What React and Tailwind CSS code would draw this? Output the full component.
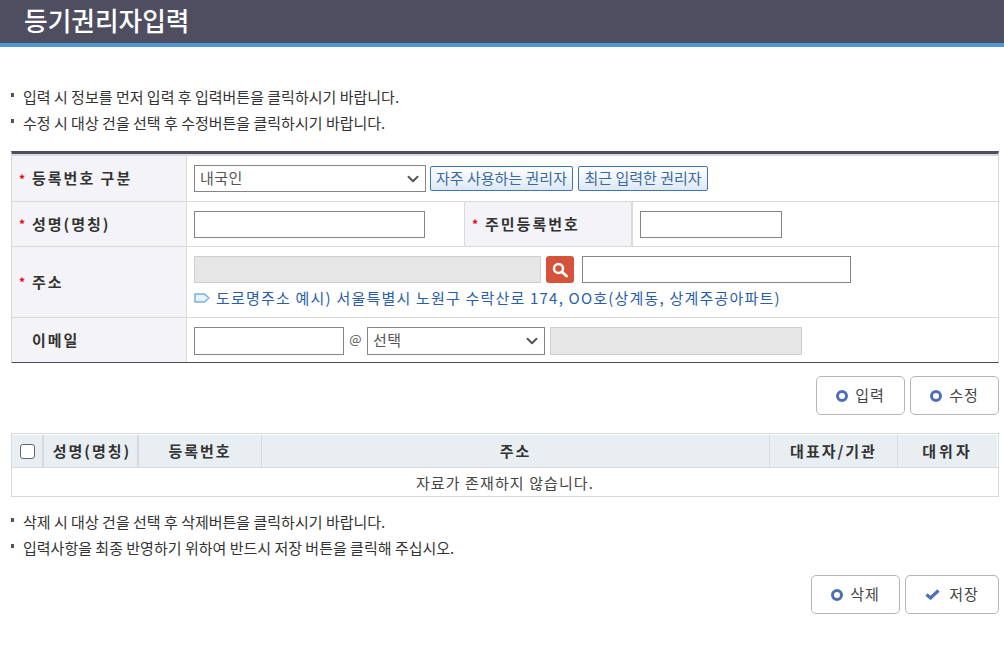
import React from "react";
import { ChevronDown } from "lucide-react";

const font = { fontFamily: '"Noto Sans CJK KR", "Liberation Sans", sans-serif' };

function Note({ children }) {
  return (
    <div className="flex items-center h-[26px] text-[15px] text-[#333]">
      <span className="w-[3px] h-[4px] bg-[#555] ml-[11px] mr-[9px] mb-[4px]" />
      <span>{children}</span>
    </div>
  );
}

function Label({ children, star, className = "" }) {
  return (
    <div className={`flex items-center bg-[#f4f4f8] font-bold text-[15px] text-[#333] tracking-[2px] ${className}`}>
      <span className="w-[13px] ml-[7px] mr-0 text-[#e8001c] text-[12px] font-bold">{star ? "*" : ""}</span>
      <span>{children}</span>
    </div>
  );
}

function Input({ className = "", disabled }) {
  return (
    <div className={`h-[27px] border ${disabled ? "border-[#cfcfcf] bg-[#e6e6e6]" : "border-[#858585] bg-white"} ${className}`} />
  );
}

function Select({ value, className = "" }) {
  return (
    <div className={`h-[27px] border border-[#858585] bg-white flex items-center justify-between pl-[5px] pr-[3px] text-[15px] text-[#555] tracking-[0.5px] ${className}`}>
      <span>{value}</span>
      <ChevronDown size={18} strokeWidth={2.6} className="text-[#555]" />
    </div>
  );
}

function LinkBtn({ children, className = "" }) {
  return (
    <div className={`h-[25px] rounded-[2px] border border-[#3f74b8] bg-gradient-to-b from-white to-[#dce8f5] flex items-center justify-center text-[15px] text-[#3d6a9e] ${className}`}>
      {children}
    </div>
  );
}

function Dot() {
  return <span className="w-[12px] h-[12px] rounded-full border-[3px] border-[#4f6fb0] bg-white" />;
}

function Check() {
  return (
    <svg width="15" height="11" viewBox="0 0 15 11" aria-hidden="true">
      <path d="M1.5 5.5 L5.5 9 L13.5 1.5" fill="none" stroke="#4f6fb0" strokeWidth="3.2" />
    </svg>
  );
}

function ActionBtn({ icon, children, className = "", gap = "gap-[7px]" }) {
  return (
    <div className={`h-[39px] w-[89px] rounded-[5px] border border-[#b5b5b5] bg-white flex items-center justify-center ${gap} text-[15px] text-[#444] tracking-[1px] ${className}`}>
      {icon}
      <span>{children}</span>
    </div>
  );
}

function Head({ children, className = "" }) {
  return (
    <div className={`flex items-center justify-center bg-[#e9eef3] border-r border-[#d6d9dd] font-bold text-[15px] text-[#333] tracking-[2px] ${className}`}>
      {children}
    </div>
  );
}

export default function App() {
  return (
    <div style={font} className="w-[1004px] h-[667px] bg-white overflow-hidden">
      <header className="h-[47px] bg-[#4f4e60] border-b-[4px] border-[#4f97d3] flex items-center pl-[24px]">
        <h1 className="text-[25.7px] font-medium text-white leading-none mb-[3px]">등기권리자입력</h1>
      </header>

      <div className="pt-[37px]">
        <Note>입력 시 정보를 먼저 입력 후 입력버튼을 클릭하시기 바랍니다.</Note>
        <Note>수정 시 대상 건을 선택 후 수정버튼을 클릭하시기 바랍니다.</Note>
      </div>

      <section className="ml-[11px] mt-[15px] w-[988px] border-t-[3px] border-t-[#4f4e60] border-b border-b-[#4f4e60] border-x border-x-[#d9d9d9]">
        <div className="flex h-[48px] border-t-[2px] border-t-[#d9d9d9] border-b border-b-[#d9d9d9]">
          <Label star className="w-[175px] border-r border-r-[#d9d9d9]">등록번호 구분</Label>
          <div className="flex-1 flex items-center pl-[7px]">
            <Select value="내국인" className="w-[232px]" />
            <LinkBtn className="w-[143px] ml-[4px]">자주 사용하는 권리자</LinkBtn>
            <LinkBtn className="w-[130px] ml-[5px]">최근 입력한 권리자</LinkBtn>
          </div>
        </div>
        <div className="flex h-[45px] border-b border-b-[#d9d9d9]">
          <Label star className="w-[175px] border-r border-r-[#d9d9d9]">성명(명칭)</Label>
          <div className="w-[278px] flex items-center pl-[7px] border-r border-r-[#d9d9d9]">
            <Input className="w-[231px]" />
          </div>
          <Label star className="w-[168px] border-r-[2px] border-r-[#d9d9d9]">주민등록번호</Label>
          <div className="flex-1 flex items-center pl-[7px]">
            <Input className="w-[142px]" />
          </div>
        </div>
        <div className="flex h-[71px] border-b border-b-[#d9d9d9]">
          <Label star className="w-[175px] border-r border-r-[#d9d9d9]">주소</Label>
          <div className="flex-1 flex flex-col pl-[7px] pt-[9px]">
            <div className="flex items-center">
              <Input disabled className="w-[347px]" />
              <div className="ml-[5px] w-[28px] h-[27px] rounded-[3px] bg-[#d4533a] flex items-center justify-center">
                <svg width="18" height="18" viewBox="0 0 18 18" aria-hidden="true">
                  <circle cx="7.5" cy="7.5" r="4.5" fill="none" stroke="white" strokeWidth="2.5" />
                  <path d="M11 11 L15.5 15" stroke="white" strokeWidth="3" strokeLinecap="round" />
                </svg>
              </div>
              <Input className="w-[269px] ml-[8px]" />
            </div>
            <div className="flex items-center mt-[3px] h-[24px] text-[15px] text-[#2a5ea8] tracking-[1.2px]">
              <svg width="16" height="10" viewBox="0 0 16 10" className="mr-[6px]" aria-hidden="true">
                <path d="M1 1 H10.5 L15 5 L10.5 9 H1 Z" fill="#e8f2fa" stroke="#79b0dc" strokeWidth="1.5" />
              </svg>
              <span>도로명주소 예시) 서울특별시 노원구 수락산로 174, OO호(상계동, 상계주공아파트)</span>
            </div>
          </div>
        </div>
        <div className="flex h-[44px]">
          <Label className="w-[175px] border-r border-r-[#d9d9d9]">이메일</Label>
          <div className="flex-1 flex items-center pl-[7px] pt-[1px]">
            <Input className="w-[150px] h-[28px]" />
            <span className="w-[23px] text-center text-[13px] text-[#555] pb-[3px]">@</span>
            <Select value="선택" className="w-[178px] h-[28px]" />
            <Input disabled className="w-[252px] h-[28px] ml-[5px]" />
          </div>
        </div>
      </section>

      <div className="flex justify-end gap-[5px] mt-[13px] pr-[5px]">
        <ActionBtn icon={<Dot />}>입력</ActionBtn>
        <ActionBtn icon={<Dot />}>수정</ActionBtn>
      </div>

      <section className="ml-[11px] mt-[18px] w-[988px] border border-[#d9d9d9] pt-px">
        <div className="flex h-[33px] border-b border-b-[#d9d9d9] pr-px">
          <Head className="w-[32px] border-r-[2px]">
            <span className="w-[15px] h-[15px] rounded-[3px] border border-[#666] bg-white" />
          </Head>
          <Head className="w-[95px] border-r-[2px] pl-[3px]">성명(명칭)</Head>
          <Head className="w-[123px]">등록번호</Head>
          <Head className="flex-1">주소</Head>
          <Head className="w-[128px]">대표자/기관</Head>
          <Head className="w-[99px] border-r-0 tracking-[3px]">대위자</Head>
        </div>
        <div className="h-[28px] pt-[2px] flex items-center justify-center text-[15px] text-[#444] tracking-[1.1px]">자료가 존재하지 않습니다.</div>
      </section>

      <div className="mt-[12px]">
        <Note>삭제 시 대상 건을 선택 후 삭제버튼을 클릭하시기 바랍니다.</Note>
        <Note>입력사항을 최종 반영하기 위하여 반드시 저장 버튼을 클릭해 주십시오.</Note>
      </div>

      <div className="flex justify-end gap-[5px] mt-[14px] pr-[5px]">
        <ActionBtn icon={<Dot />}>삭제</ActionBtn>
        <ActionBtn icon={<Check />} className="w-[94px]" gap="gap-[9px]">저장</ActionBtn>
      </div>
    </div>
  );
}
